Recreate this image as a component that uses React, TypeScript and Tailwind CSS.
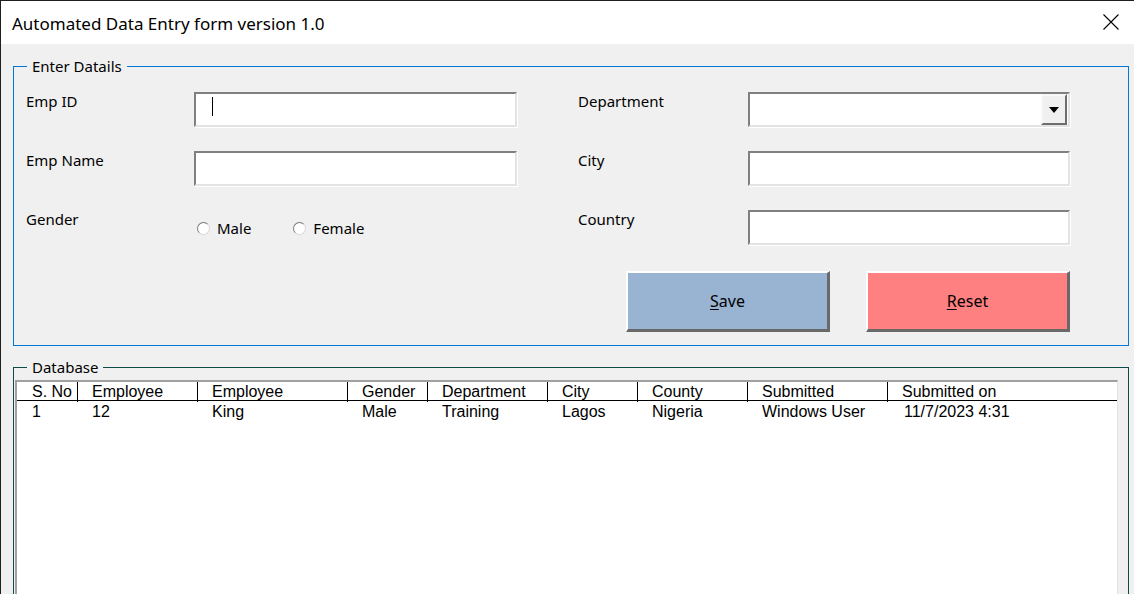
import React from 'react';

const columns = [
  { title: 'S. No', width: 'pl-[15px]' },
  { title: 'Employee', width: 'pl-[14px]' },
  { title: 'Employee', width: 'pl-[14px]' },
  { title: 'Gender', width: 'pl-[14px]' },
  { title: 'Department', width: 'pl-[14px]' },
  { title: 'City', width: 'pl-[14px]' },
  { title: 'County', width: 'pl-[14px]' },
  { title: 'Submitted', width: 'pl-[14px]' },
  { title: 'Submitted on', width: 'pl-[14px]' },
];

const rows = [['1', '12', 'King', 'Male', 'Training', 'Lagos', 'Nigeria', 'Windows User', '11/7/2023 4:31']];

// Windows-style sunken text box
const TextBox = ({ children }: { children?: React.ReactNode }) => (
  <div className="relative h-[35px] bg-white border-2 border-t-[#808080] border-l-[#808080] border-r-[#e3e3e3] border-b-[#e3e3e3] shadow-[1px_1px_0_#ffffff]">
    {children}
  </div>
);

const Radio = ({ label }: { label: string }) => (
  <label className="flex items-center gap-[7px]">
    <span className="w-[13px] h-[13px] rounded-full bg-white border border-t-[#7a7a7a] border-l-[#7a7a7a] border-r-[#d6d6d6] border-b-[#d6d6d6]" />
    <span>{label}</span>
  </label>
);

const Label = ({ text }: { text: string }) => <div className="leading-[18px] self-start">{text}</div>;

export default function App() {
  return (
    <div
      className="w-[1134px] h-[594px] overflow-hidden bg-[#f0f0f0] border-l border-t border-[#1f1f1f] text-black"
      style={{ fontFamily: '"Noto Sans", "Open Sans", sans-serif' }}
    >
      {/* Title bar */}
      <div className="h-[43px] bg-white flex items-center justify-between pl-[11px] pr-[15px]">
        <span className="text-[17px] leading-[20px] pt-[2px]">Automated Data Entry form version 1.0</span>
        <svg width="16" height="16" viewBox="0 0 16 16" className="mb-[2px]">
          <path d="M0.5 0.5 L15.5 15.5 M15.5 0.5 L0.5 15.5" stroke="#000" strokeWidth="1.1" fill="none" />
        </svg>
      </div>

      {/* Enter Datails */}
      <fieldset className="ml-[12px] mt-[12px] w-[1116px] border border-[#0078d7] text-[15px]">
        <legend className="ml-[13px] px-[5px] leading-[20px]">Enter Datails</legend>
        <div className="pl-[12px] pt-[16px] pb-[13px] w-[1056px]">
          <div className="grid grid-cols-[168px_323px_61px_170px_322px] gap-y-[24px] items-center">
            <Label text="Emp ID" />
            <TextBox>
              <span className="absolute left-[16px] top-[3px] w-px h-[19px] bg-black" />
            </TextBox>
            <div />
            <Label text="Department" />
            <TextBox>
              <div className="absolute right-[1px] top-0 w-[26px] h-[31px] bg-[#f0f0f0] border-2 border-t-[#f8f8f8] border-l-[#f8f8f8] border-r-[#6d6d6d] border-b-[#6d6d6d] flex items-center justify-center">
                <svg width="10" height="6" viewBox="0 0 10 6">
                  <path d="M0 0 H10 L5 6 Z" fill="#000" />
                </svg>
              </div>
            </TextBox>

            <Label text="Emp Name" />
            <TextBox />
            <div />
            <Label text="City" />
            <TextBox />

            <Label text="Gender" />
            <div className="h-[35px] flex items-center gap-[42px] pl-[3px] pt-[2px]">
              <Radio label="Male" />
              <Radio label="Female" />
            </div>
            <div />
            <Label text="Country" />
            <TextBox />
          </div>

          <div className="flex justify-end gap-[36px] mt-[26px] text-[16px]">
            <button className="w-[204px] h-[61px] bg-[#98b4d2] border-t-2 border-l-2 border-white border-r-[3px] border-b-[3px] border-r-[#696969] border-b-[#696969]">
              <span className="underline underline-offset-2">S</span>ave
            </button>
            <button className="w-[204px] h-[61px] bg-[#ff8080] border-t-2 border-l-2 border-white border-r-[3px] border-b-[3px] border-r-[#696969] border-b-[#696969]">
              <span className="underline underline-offset-2">R</span>eset
            </button>
          </div>
        </div>
      </fieldset>

      {/* Database */}
      <fieldset className="ml-[12px] mt-[11px] w-[1116px] h-[300px] border border-[#0e4d47] text-[15px]">
        <legend className="ml-[13px] px-[5px] leading-[20px]">Database</legend>
        <div className="pl-[1px] pt-[3px]">
          <div
            className="w-[1103px] h-[240px] bg-white border-t-2 border-l-2 border-[#a0a0a0] border-r border-r-[#e3e3e3] text-[16px]"
            style={{ fontFamily: '"Liberation Sans", Arial, sans-serif' }}
          >
            <div className="grid grid-cols-[61px_120px_150px_80px_120px_90px_110px_140px_1fr] h-[19px] border-b border-black leading-[20px]">
              {columns.map((c, i) => (
                <div key={i} className={`${c.width} ${i < columns.length - 1 ? 'border-r border-black' : ''} whitespace-nowrap`}>
                  {c.title}
                </div>
              ))}
            </div>
            {rows.map((r, ri) => (
              <div key={ri} className="grid grid-cols-[61px_120px_150px_80px_120px_90px_110px_140px_1fr] h-[22px] leading-[22px]">
                {r.map((cell, ci) => (
                  <div key={ci} className={`${ci === 0 ? 'pl-[15px]' : ci === 8 ? 'pl-[16px]' : 'pl-[14px]'} whitespace-nowrap`}>
                    {cell}
                  </div>
                ))}
              </div>
            ))}
          </div>
        </div>
      </fieldset>
    </div>
  );
}
